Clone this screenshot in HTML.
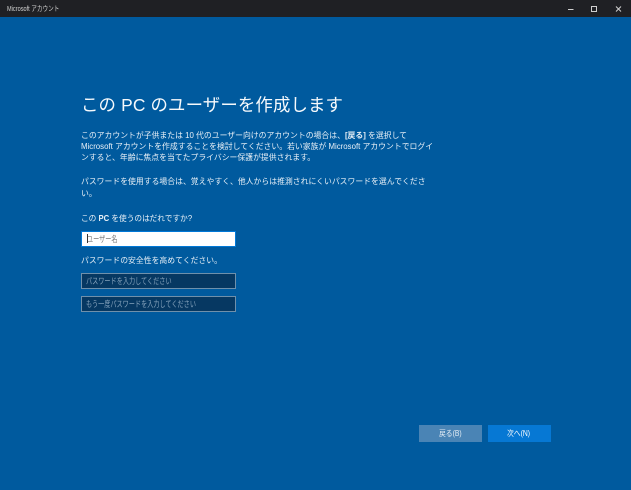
<!DOCTYPE html>
<html lang="ja">
<head>
<meta charset="utf-8">
<style>
html,body{margin:0;padding:0;width:631px;height:490px;overflow:hidden;background:#005a9e;}
body{position:relative;font-family:"Liberation Sans","Noto Sans CJK JP",sans-serif;color:#fff;}
.a{position:absolute;white-space:nowrap;}
#bar{left:0;top:0;width:631px;height:17px;background:#1f2024;}
#title{left:7px;top:4px;font-size:7.2px;line-height:10px;color:#d0d0d0;transform:scaleX(.78);transform-origin:0 0;}
h1{margin:0;font-weight:400;font-size:17.4px;line-height:24px;left:81px;top:93px;letter-spacing:.15px;color:#f6f9fc;filter:blur(.25px);}
.t{font-size:7.85px;line-height:12px;left:81px;color:#e8f0f7;filter:blur(.25px);}
.box{left:81px;width:153px;height:14px;}
.dark{background:#063862;border:1px solid #6f90ab;}
.ph{left:86px;font-size:8.3px;line-height:12px;color:#86a3bc;transform:scaleX(.74);transform-origin:0 0;}
.btn{top:425px;height:17px;width:63px;background:#4a84b5;}
.bt{top:428px;font-size:8px;line-height:12px;color:#e4edf5;transform:scaleX(.85);transform-origin:0 0;}
</style>
</head>
<body>
<div class="a" id="bar"></div>
<div class="a" id="title">Microsoft アカウント</div>
<svg class="a" style="left:560px;top:0" width="71" height="17" fill="none" stroke="#cfcfcf" stroke-width="1">
<path d="M8 9.5h5.5"/><rect x="31.5" y="6.5" width="5" height="5"/><path d="M56 6.5l5 5M61 6.5l-5 5"/>
</svg>
<h1 class="a">この PC のユーザーを作成します</h1>
<div class="a t" style="top:130px">このアカウントが子供または 10 代のユーザー向けのアカウントの場合は、<b>[戻る]</b> を選択して</div>
<div class="a t" style="top:141px">Microsoft アカウントを作成することを検討してください。若い家族が Microsoft アカウントでログイ</div>
<div class="a t" style="top:152px">ンすると、年齢に焦点を当てたプライバシー保護が提供されます。</div>
<div class="a t" style="top:176px">パスワードを使用する場合は、覚えやすく、他人からは推測されにくいパスワードを選んでくださ</div>
<div class="a t" style="top:188px">い。</div>
<div class="a t" style="top:213px;transform:scaleX(.98);transform-origin:0 0">この <b>PC</b> を使うのはだれですか?</div>
<div class="a box" style="top:231px;background:#fff;border:1px solid #0078d7;"></div>
<div class="a ph" style="left:87px;top:233px;color:#777;">ユーザー名</div>
<div class="a" style="left:87px;top:234px;width:1px;height:9px;background:#333"></div>
<div class="a t" style="top:255px">パスワードの安全性を高めてください。</div>
<div class="a box dark" style="top:273px"></div>
<div class="a ph" style="top:275px">パスワードを入力してください</div>
<div class="a box dark" style="top:296px"></div>
<div class="a ph" style="top:298px">もう一度パスワードを入力してください</div>
<div class="a btn" style="left:419px;"></div>
<div class="a bt" style="left:439px;">戻る(B)</div>
<div class="a btn" style="left:488px;background:#0678d4;"></div>
<div class="a bt" style="left:507px;color:#fff;">次へ(N)</div>
</body>
</html>
